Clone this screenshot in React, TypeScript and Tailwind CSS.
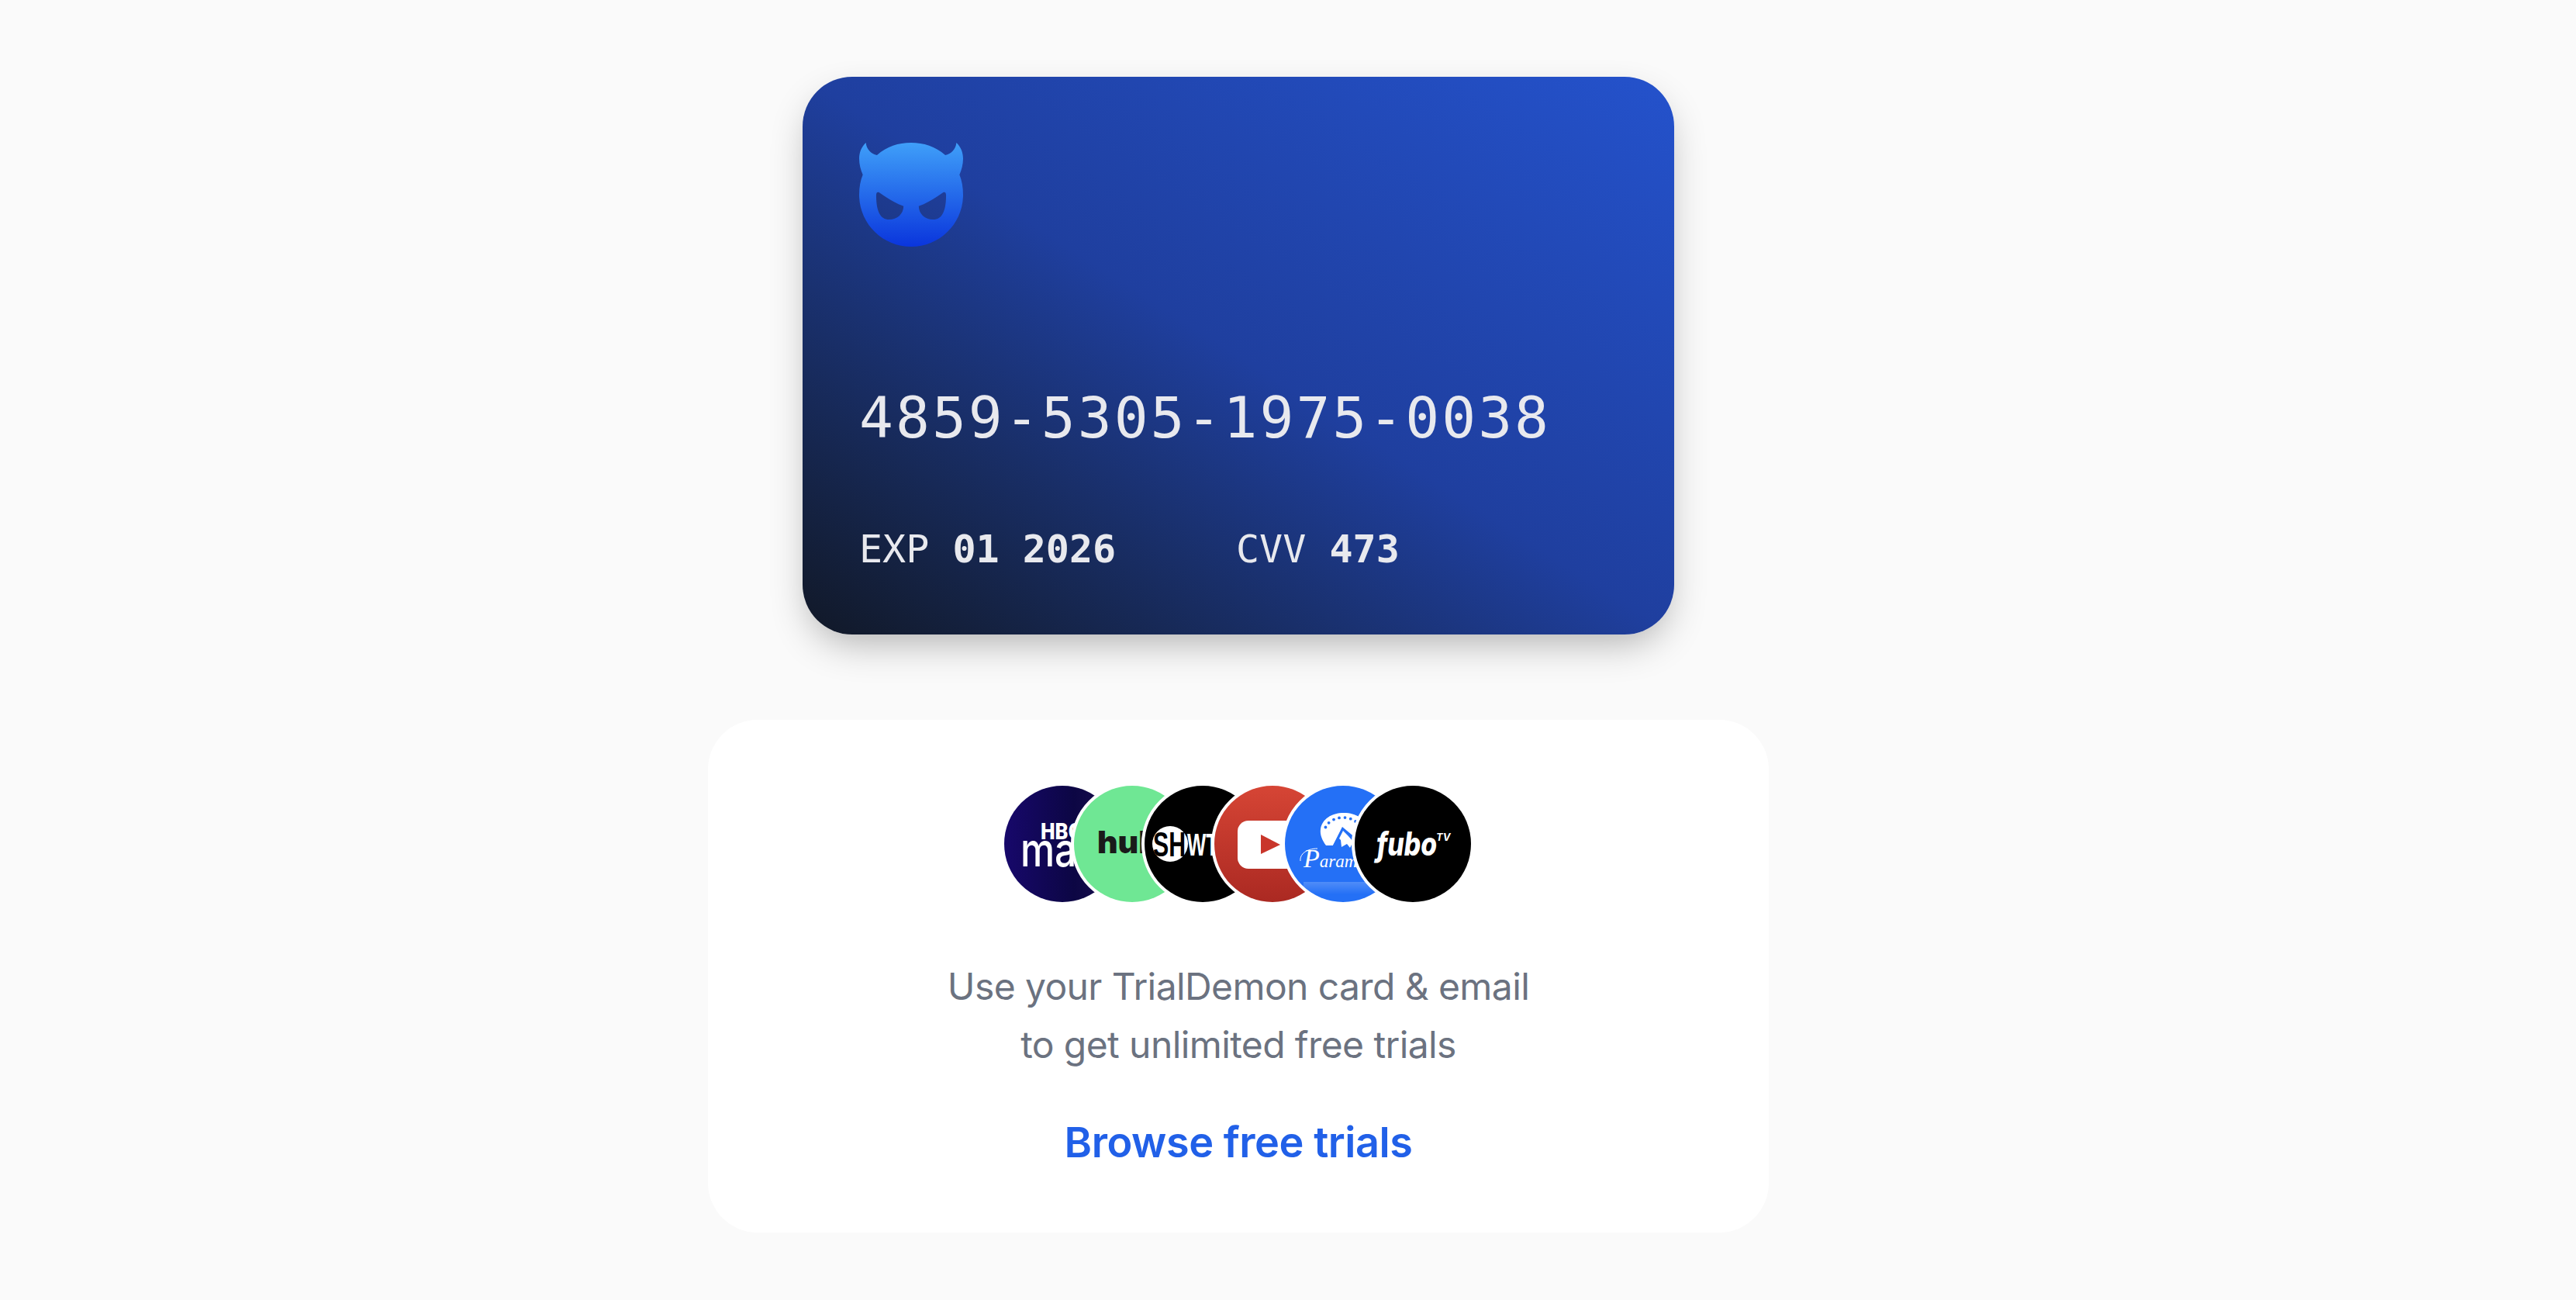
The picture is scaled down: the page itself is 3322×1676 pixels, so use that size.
import React from 'react'

const Demon = () => (
    <svg viewBox="0 0 403 403" className="w-[134px] h-[134px] block">
        <defs>
            <linearGradient id="demonFill" x1="0" y1="0" x2="0" y2="1">
                <stop offset="0" stopColor="#3f9ff9" />
                <stop offset="1" stopColor="#0a35dc" />
            </linearGradient>
        </defs>
        <path
            fillRule="evenodd"
            fill="url(#demonFill)"
            d="M26 0C28 24 46 44 69 48C108 14 152 0 201 0C250 0 295 14 334 48C357 44 375 24 377 0C396 18 403 40 403 62C403 85 397 106 389 124C398 146 403 172 403 202C403 313 313 403 202 403C90 403 0 313 0 202C0 172 5 146 14 124C6 106 0 85 0 62C0 40 7 18 26 0ZM78 193C70 189 66 194 66 204C66 262 80 298 116 298C148 298 172 276 172 246C134 232 108 214 78 193ZM325 193C295 214 269 232 231 246C231 276 255 298 287 298C323 298 337 262 337 204C337 194 333 189 325 193Z"
        />
    </svg>
)

const Hbo = () => (
    <svg viewBox="0 0 150 150" className="w-full h-full block">
        <defs>
            <linearGradient id="hboBg" x1="0" y1="0" x2="1" y2="0">
                <stop offset="0" stopColor="#17086b" />
                <stop offset="0.6" stopColor="#0c0644" />
                <stop offset="1" stopColor="#1d1150" />
            </linearGradient>
        </defs>
        <rect width="150" height="150" fill="url(#hboBg)" />
        <text x="47" y="69" fill="#fff" fontFamily="Roboto, sans-serif" fontWeight="900" fontSize="30" textLength="54" lengthAdjust="spacingAndGlyphs">HBO</text>
        <text x="21" y="104" fill="#fff" fontFamily="Inter, sans-serif" fontWeight="500" fontSize="60" textLength="100" lengthAdjust="spacingAndGlyphs">max</text>
    </svg>
)

const Hulu = () => (
    <svg viewBox="0 0 150 150" className="w-full h-full block">
        <rect width="150" height="150" fill="#6fe794" />
        <text x="30" y="87" fill="#1a1a1a" fontFamily="Inter, sans-serif" fontWeight="900" fontSize="40" textLength="92" lengthAdjust="spacingAndGlyphs">hulu</text>
    </svg>
)

const Showtime = () => (
    <svg viewBox="0 0 150 150" className="w-full h-full block">
        <rect width="150" height="150" fill="#000" />
        <circle cx="33" cy="75" r="23" fill="#fff" />
        <text x="11" y="91" fill="#000" fontFamily="'Liberation Sans', sans-serif" fontWeight="700" fontSize="44" textLength="42" lengthAdjust="spacingAndGlyphs">SH</text>
        <text x="55" y="90" fill="#fff" fontFamily="'Liberation Sans', sans-serif" fontWeight="700" fontSize="40" textLength="40" lengthAdjust="spacingAndGlyphs">WT</text>
    </svg>
)

const Youtube = () => (
    <svg viewBox="0 0 150 150" className="w-full h-full block">
        <defs>
            <linearGradient id="ytBg" x1="0" y1="0" x2="0" y2="1">
                <stop offset="0" stopColor="#d64535" />
                <stop offset="1" stopColor="#ab2922" />
            </linearGradient>
        </defs>
        <rect width="150" height="150" fill="url(#ytBg)" />
        <rect x="30" y="45" width="100" height="62" rx="14" fill="#fff" />
        <path d="M60 63L85 76L60 88Z" fill="#c9362b" />
    </svg>
)

// stars along the rim of the paramount dome
const stars = [200, 220, 240, 258, 276, 294, 312, 330].map((deg) => ({
    x: 75 + 24 * Math.cos((deg * Math.PI) / 180),
    y: 60 + 19 * Math.sin((deg * Math.PI) / 180),
}))

const Paramount = () => (
    <svg viewBox="0 0 150 150" className="w-full h-full block">
        <defs>
            <linearGradient id="paraShine" x1="0" y1="0" x2="0" y2="1">
                <stop offset="0" stopColor="#ffffff" stopOpacity="0.2" />
                <stop offset="1" stopColor="#ffffff" stopOpacity="0" />
            </linearGradient>
        </defs>
        <rect width="150" height="150" fill="#2470f6" />
        <path d="M53 77C48 70 45 63 46 56C48 43 60 35 76 35C92 35 104 43 106 56C107 63 105 70 99 77L90 67L74 54L62 77Z" fill="#fff" />
        <path d="M61 79L74 53L92 68L100 79Z" fill="#2470f6" />
        <path d="M75 58L70 68L72 70L73 79L80 75L84 80L88 72L81 64Z" fill="#fff" />
        {stars.map((star, index) => (
            <circle key={index} cx={star.x} cy={star.y} r="1.9" fill="#2470f6" />
        ))}
        <path d="M20 97C19 88 28 81 42 81" fill="none" stroke="#fff" strokeWidth="1" />
        <text x="24" y="105" fill="#fff" fontFamily="'Liberation Serif', serif" fontStyle="italic" fontSize="23">
            <tspan fontSize="34">P</tspan>aramount
        </text>
        <rect x="24" y="124" width="100" height="16" fill="url(#paraShine)" />
    </svg>
)

const Fubo = () => (
    <svg viewBox="0 0 150 150" className="w-full h-full block">
        <rect width="150" height="150" fill="#000" />
        <text x="28" y="90" fill="#fff" fontFamily="Inter, sans-serif" fontWeight="800" fontStyle="italic" fontSize="42" textLength="78" lengthAdjust="spacingAndGlyphs">fubo</text>
        <text x="105" y="71" fill="#fff" fontFamily="Inter, sans-serif" fontWeight="700" fontStyle="italic" fontSize="13">TV</text>
    </svg>
)

const logos = [Hbo, Hulu, Showtime, Youtube, Paramount, Fubo]

const App = () => {
    return (
        <section className="min-h-screen w-full bg-[#fafafa] flex flex-col items-center pt-[99px] pr-32">
            <div className="w-[1124px] h-[719px] rounded-[64px] bg-gradient-to-tr from-[#111827] via-[#1f3f9f] to-[#2452cc] shadow-[0_20px_50px_-10px_rgba(0,0,0,0.3)] pl-[73px] pt-[85px] text-[#e8e9ee] font-['DejaVu_Sans_Mono',monospace] flex flex-col">
                <Demon />
                <p className="mt-[176px] text-[73px] leading-[90px] tracking-[3px]">4859-5305-1975-0038</p>
                <div className="mt-[94px] flex text-[50px] leading-[60px]">
                    <p className="w-[486px]">EXP <span className="font-bold">01 2026</span></p>
                    <p>CVV <span className="font-bold">473</span></p>
                </div>
            </div>

            <div className="mt-[110px] w-[1368px] h-[661px] rounded-[64px] bg-white pt-[81px] flex flex-col items-center font-['Inter',sans-serif]">
                <div className="flex -translate-x-px">
                    {logos.map((Logo, index) => (
                        <div
                            key={index}
                            className="w-[158px] h-[158px] rounded-full overflow-hidden border-4 border-white bg-white first:ml-0 ml-[-67.5px]"
                        >
                            <Logo />
                        </div>
                    ))}
                </div>
                <p className="mt-[67px] text-center text-[48px] leading-[75px] tracking-[-0.6px] text-[#6b7280]">
                    Use your TrialDemon card &amp; email<br />to get unlimited free trials
                </p>
                <a className="mt-[53px] text-[54px] leading-[72px] tracking-[-0.45px] font-semibold text-[#2160e8]">Browse free trials</a>
            </div>
        </section>
    )
}

export default App
